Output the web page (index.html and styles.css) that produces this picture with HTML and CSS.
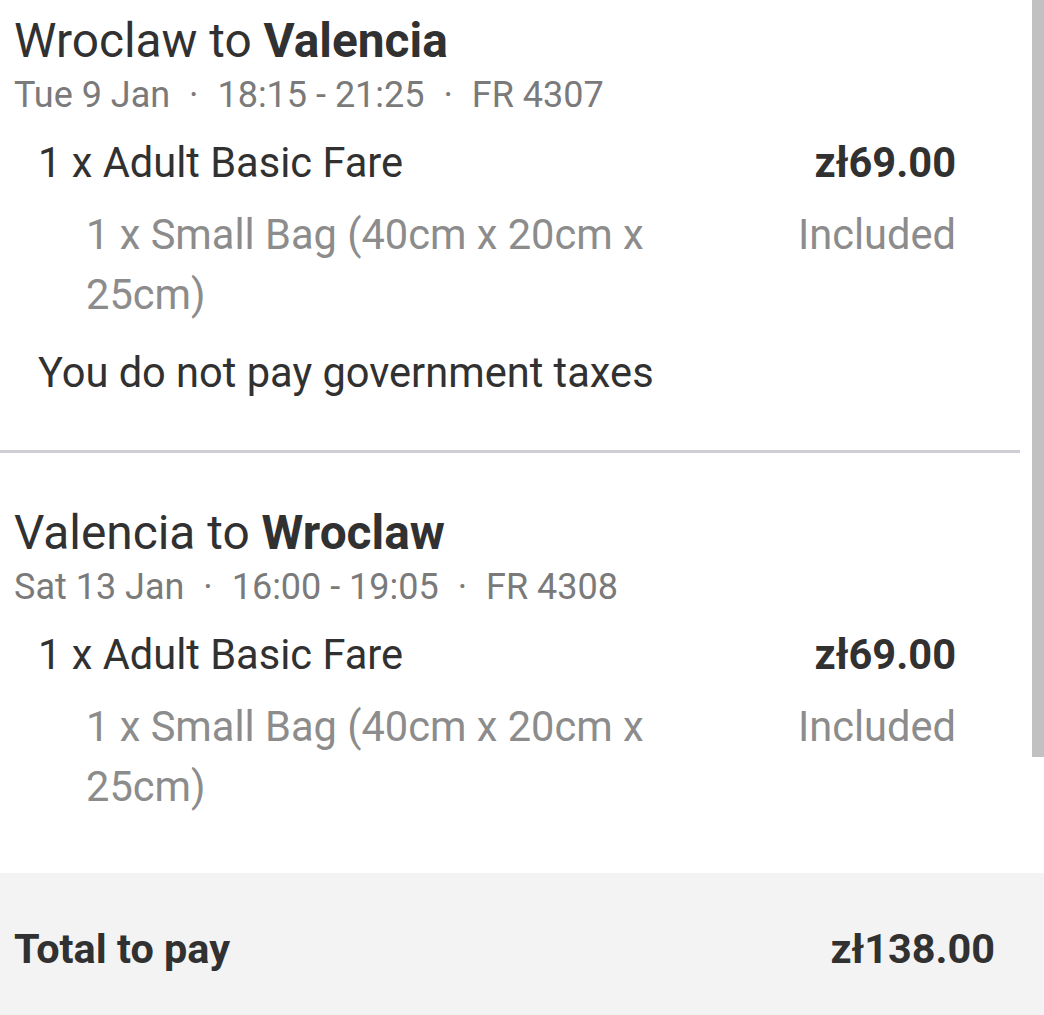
FILE: index.html
```html
<!DOCTYPE html>
<html lang="en">
<head>
  <meta charset="UTF-8">
  <meta name="viewport" content="width=device-width, initial-scale=1.0">
  <title>Price breakdown</title>
  <link rel="stylesheet" href="styles.css">
</head>
<body>
  <main class="breakdown">
    <div class="viewport">
      <div class="flights">
        <section class="flight">
          <h2 class="route">Wroclaw to <b>Valencia</b></h2>
          <p class="meta">Tue 9 Jan <span class="dot">·</span> 18:15 - 21:25 <span class="dot">·</span> FR 4307</p>
          <div class="row fare">
            <span class="label">1 x Adult Basic Fare</span>
            <span class="price">zł69.00</span>
          </div>
          <div class="row extra">
            <span class="label">1 x Small Bag (40cm x 20cm x 25cm)</span>
            <span class="price">Included</span>
          </div>
          <div class="row note">
            <span class="label">You do not pay government taxes</span>
          </div>
        </section>

        <section class="flight">
          <h2 class="route">Valencia to <b>Wroclaw</b></h2>
          <p class="meta">Sat 13 Jan <span class="dot">·</span> 16:00 - 19:05 <span class="dot">·</span> FR 4308</p>
          <div class="row fare">
            <span class="label">1 x Adult Basic Fare</span>
            <span class="price">zł69.00</span>
          </div>
          <div class="row extra">
            <span class="label">1 x Small Bag (40cm x 20cm x 25cm)</span>
            <span class="price">Included</span>
          </div>
          <div class="row note">
            <span class="label">You do not pay government taxes</span>
          </div>
        </section>
      </div>
    </div>
    <div class="scrollbar"></div>
  </main>

  <footer class="total">
    <span>Total to pay</span>
    <span>zł138.00</span>
  </footer>
</body>
</html>
```

FILE: styles.css
```css
body {
  margin: 0;
  font-family: Roboto, "Noto Sans", Arial, sans-serif;
  color: #313131;
  background-color: #fff;
}
.breakdown {
  position: relative;
  height: 873px;
}
.viewport {
  height: 847px;
  overflow: hidden;
}
.flights {
  margin-top: -39px;
  margin-right: 24px;
}
.flight {
  padding: 50px 0 47px 14px;
  border-bottom: 3px solid #cdcfd4;
}
.route {
  margin: 0;
  font-size: 47.8px;
  line-height: 60px;
  font-weight: normal;
}
.route b {
  font-weight: bold;
}
.meta {
  margin: 2px 0 0;
  font-size: 36px;
  line-height: 44px;
  color: #7a7a7a;
}
.dot {
  padding: 0 10px;
}
.row {
  display: flex;
  justify-content: space-between;
  padding-right: 64px;
  font-size: 41.6px;
  line-height: 60px;
}
.fare {
  margin-top: 16px;
  padding-left: 24px;
}
.fare .price {
  font-weight: bold;
}
.extra {
  margin-top: 12px;
  padding-left: 72px;
  color: #8c8c8c;
}
.extra .label {
  max-width: 600px;
}
.note {
  margin-top: 18px;
  padding-left: 24px;
}
.scrollbar {
  position: absolute;
  top: 0;
  right: 0;
  width: 12px;
  height: 757px;
  background-color: #c1c1c1;
}
.total {
  display: flex;
  justify-content: space-between;
  align-items: center;
  height: 142px;
  box-sizing: border-box;
  padding: 9px 49px 0 14px;
  background-color: #f3f3f3;
  font-size: 41.4px;
  font-weight: bold;
}
```
